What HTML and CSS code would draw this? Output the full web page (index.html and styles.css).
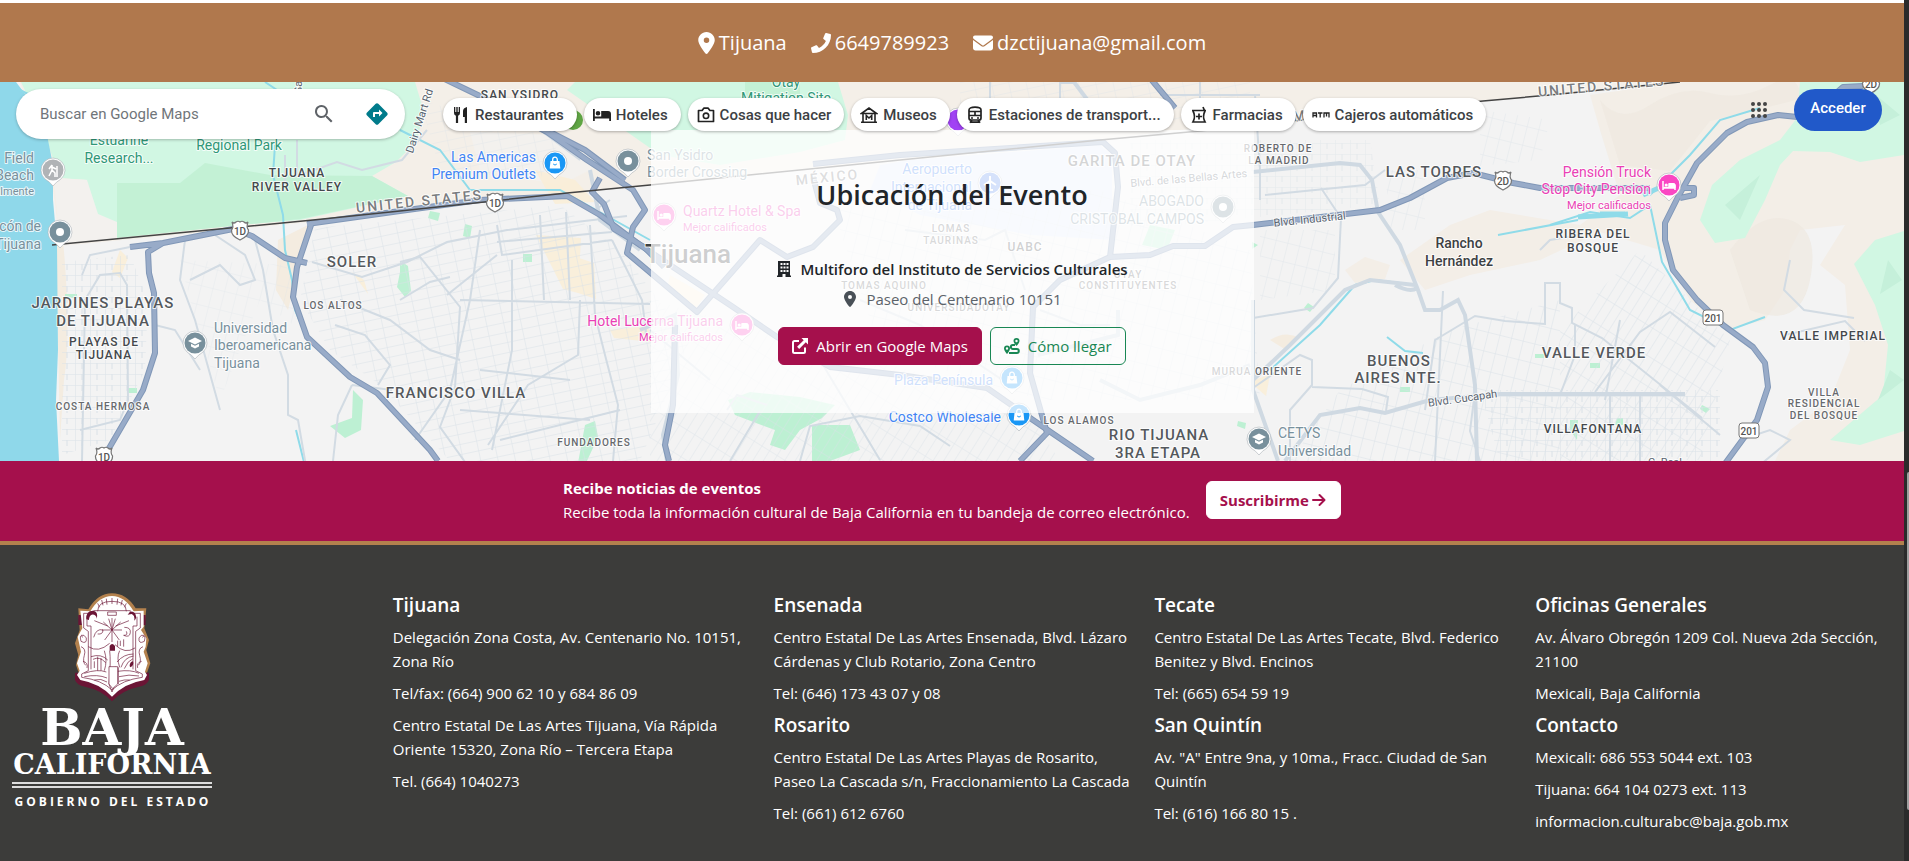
FILE: index.html
```html
<!DOCTYPE html>
<html lang="es">
<head>
<meta charset="utf-8">
<title>Ubicación del Evento</title>
<link rel="stylesheet" href="styles.css">
</head>
<body>
<svg class="defs" width="0" height="0" aria-hidden="true">
  <symbol id="i-pin" viewBox="0 0 384 512"><path d="M215.700 499.200C267 435 384 279.400 384 192C384 86 298 0 192 0S0 86 0 192c0 87.400 117 243 168.300 307.200c12.300 15.300 35.100 15.300 47.400 0zM192 128a64 64 0 1 1 0 128 64 64 0 1 1 0-128z"/></symbol>
  <symbol id="i-phone" viewBox="0 0 512 512"><path d="M493.400 24.600l-104-24c-11.300-2.600-22.900 3.300-27.500 13.900l-48 112c-4.200 9.800-1.400 21.300 6.900 28l60.600 49.600c-36 76.700-98.900 140.500-177.200 177.200l-49.600-60.600c-6.800-8.300-18.200-11.100-28-6.900l-112 48C3.900 366.500-2 378.100.6 389.400l24 104C27.100 504.200 36.700 512 48 512c256.100 0 464-207.500 464-464 0-11.200-7.700-20.900-18.600-23.400z"/></symbol>
  <symbol id="i-mail" viewBox="0 0 512 512"><path d="M48 64C21.500 64 0 85.500 0 112c0 15.100 7.100 29.300 19.200 38.400L236.800 313.600c11.400 8.500 27 8.500 38.400 0L492.800 150.400c12.100-9.100 19.200-23.300 19.200-38.400c0-26.500-21.500-48-48-48L48 64zM0 176L0 384c0 35.300 28.700 64 64 64l384 0c35.300 0 64-28.700 64-64l0-208L294.400 339.200c-22.800 17.100-54 17.100-76.800 0L0 176z"/></symbol>
  <symbol id="i-building" viewBox="0 0 14 16"><path fill-rule="evenodd" d="M1 0h12v14.500h1V16H8.500v-3h-3v3H0v-1.500h1zM3.500 2v2h2V2zM6.500 2v2h2V2zM9.500 2v2h2V2zM3.500 5.500v2h2v-2zM6.500 5.500v2h2v-2zM9.500 5.500v2h2v-2zM3.500 9v2h2V9zM6.500 9v2h2V9zM9.500 9v2h2V9z"/></symbol>
  <symbol id="i-open" viewBox="0 0 16 16"><path d="M7 3H2.500Q1 3 1 4.500v9Q1 15 2.500 15h9q1.500 0 1.500-1.500V9.500" fill="none" stroke="currentColor" stroke-width="2"/><path d="M9.500 0H16v6.500l-2.200-2.200-6.600 6.600-2.100-2.100 6.600-6.600z"/></symbol>
  <symbol id="i-route" viewBox="0 0 16 16"><path fill-rule="evenodd" d="M12.500 0a3 3 0 0 1 3 3c0 1.700-2 4-3 5-1-1-3-3.300-3-5a3 3 0 0 1 3-3zm0 1.800a1.200 1.200 0 1 0 0 2.400 1.200 1.200 0 0 0 0-2.400zM3 7.500a3 3 0 0 1 3 3c0 1.700-2 4.500-3 5.500-1-1-3-3.800-3-5.500a3 3 0 0 1 3-3zm0 1.800a1.200 1.200 0 1 0 0 2.400 1.200 1.200 0 0 0 0-2.400z"/><path d="M11 7H8.800a1.900 1.900 0 0 0 0 3.900h4a2 2 0 0 1 0 4H5" fill="none" stroke="currentColor" stroke-width="2"/></symbol>
  <symbol id="i-arrow" viewBox="0 0 16 16"><path d="M2 8h11M8.500 3l5 5-5 5" fill="none" stroke="currentColor" stroke-width="2" stroke-linecap="round" stroke-linejoin="round"/></symbol>
  <symbol id="i-search" viewBox="0 0 24 24"><path d="M15.500 14h-.8l-.3-.3A6.500 6.500 0 1 0 13.700 14.400l.3.300v.8l5 5 1.500-1.500zm-6 0a4.500 4.500 0 1 1 0-9 4.500 4.500 0 0 1 0 9z"/></symbol>
  <symbol id="i-dir" viewBox="0 0 24 24"><path fill-rule="evenodd" d="M12 1.200q.7 0 1.300.6l8.900 8.900q1.100 1.300 0 2.600l-8.900 8.900q-1.300 1.100-2.600 0l-8.900-8.900q-1.100-1.300 0-2.600l8.900-8.900q.6-.6 1.300-.6zM14 7.500V10H9q-1 0-1 1v4h2v-3h4v2.500l3.500-3.500z"/></symbol>
  <symbol id="i-food" viewBox="0 0 16 18"><path d="M1 1h1.300v5h1V1h1.400v5h1V1H7v6q0 2-1.900 2.700V17H2.900V9.700Q1 9 1 7zM14 1v16h-2.200v-6H10V5q0-3 4-4z"/></symbol>
  <symbol id="i-bed" viewBox="0 0 18 14"><path d="M0 1h1.800v7.500h6.400V3H15q3 0 3 3v7h-1.800v-2.500H1.800V13H0zM5 3a2.300 2.300 0 1 1 0 4.600A2.300 2.300 0 0 1 5 3z"/></symbol>
  <symbol id="i-camera" viewBox="0 0 18 16"><path d="M1.500 3.500h3.600L6.800 1.200h4.400l1.700 2.300h3.600v11h-15z" fill="none" stroke="currentColor" stroke-width="1.700" stroke-linejoin="round"/><circle cx="9" cy="8.800" r="2.700" fill="none" stroke="currentColor" stroke-width="1.600"/></symbol>
  <symbol id="i-museum" viewBox="0 0 18 18"><path d="M1.500 7.500L9 2l7.500 5.500zM3 8v8M15 8v8M1 16.200h16M6.300 14V9.500L9 12l2.700-2.500V14" fill="none" stroke="currentColor" stroke-width="1.600"/></symbol>
  <symbol id="i-train" viewBox="0 0 16 18"><path d="M2 4q0-2.800 6-2.800T14 4v8q0 2-2 2H4q-2 0-2-2zM2 5.500h12M2 9.500h12M8 5v5M5 14l-2 2.800M11 14l2 2.800M4 16.200h8" fill="none" stroke="currentColor" stroke-width="1.700"/><circle cx="5" cy="12" r="1"/><circle cx="11" cy="12" r="1"/></symbol>
  <symbol id="i-pharm" viewBox="0 0 16 18"><path d="M1 4.500h14M2 5q3 5.500 0 11h12q-3-5.500 0-11M13.500 4.500L12 1M8 7.500v6M5 10.500h6" fill="none" stroke="currentColor" stroke-width="1.700"/></symbol>
  <symbol id="i-atm" viewBox="0 0 18 8"><path d="M1 6.500V2h3.500v4.500M1 4.500h3.500M6 2h4.500M8.200 2v4.500M12 6.500V2h5v4.500M14.500 2v3.500" fill="none" stroke="currentColor" stroke-width="1.300"/></symbol>
  <symbol id="i-apps" viewBox="0 0 18 18"><g><circle cx="3" cy="3" r="2"/><circle cx="9" cy="3" r="2"/><circle cx="15" cy="3" r="2"/><circle cx="3" cy="9" r="2"/><circle cx="9" cy="9" r="2"/><circle cx="15" cy="9" r="2"/><circle cx="3" cy="15" r="2"/><circle cx="9" cy="15" r="2"/><circle cx="15" cy="15" r="2"/></g></symbol>
</svg>

<div class="page">
  <header class="contact">
    <a class="contact-item" href="#mapa"><svg class="ico-pin"><use href="#i-pin"/></svg>Tijuana</a>
    <a class="contact-item" href="tel:6649789923"><svg class="ico"><use href="#i-phone"/></svg>6649789923</a>
    <a class="contact-item" href="mailto:dzctijuana@gmail.com"><svg class="ico"><use href="#i-mail"/></svg>dzctijuana@gmail.com</a>
  </header>

  <section class="map" id="mapa">
    <svg class="map-art" viewBox="0 82 1904 379" preserveAspectRatio="xMidYMid slice">
      <defs>
        <pattern id="g1" width="15" height="11" patternUnits="userSpaceOnUse"><path d="M0 0H15M0 0V11M7 0V6" class="grid"/></pattern>
        <pattern id="g2" width="17" height="10" patternUnits="userSpaceOnUse" patternTransform="rotate(-12)"><path d="M0 0H17M0 0V10" class="grid"/></pattern>
        <pattern id="g3" width="9" height="26" patternUnits="userSpaceOnUse" patternTransform="rotate(32)"><path d="M0 0H9M0 0V26" class="grid"/></pattern>
        <pattern id="g4" width="12" height="19" patternUnits="userSpaceOnUse" patternTransform="rotate(14)"><path d="M0 0H12M0 0V19" class="grid"/></pattern>
        <g id="pinshape"><path d="M0 16Q-3 12-8 9A12 12 0 1 1 8 9Q3 12 0 16z" fill="#fff" stroke="#a9b0b5" stroke-width=".6"/></g>
        <g id="pdot"><use href="#pinshape"/><circle r="10.500" fill="#78909c"/><circle r="4" fill="#fff"/></g>
        <g id="pbed"><use href="#pinshape"/><circle r="10.500" fill="#fa47c3"/><path d="M-6-4v9M-6 3H6.500M6 5V1q0-2-2-2H0v3.500h-5" fill="none" stroke="#fff" stroke-width="1.500"/><path d="M0-2h4q2.500 0 2.500 2v3H0z" fill="#fff"/><circle cx="-2.800" cy="0" r="1.600" fill="#fff"/></g>
        <g id="pshop"><use href="#pinshape"/><circle r="10.500" fill="#1a97f5"/><path d="M-4.500-2h9l.8 7.500H-5.300z" fill="#fff"/><path d="M-2.300-2v-1.500a2.300 2.300 0 0 1 4.600 0V-2" fill="none" stroke="#fff" stroke-width="1.300"/><path d="M-1.800 1q1.800 2.200 3.600 0" fill="none" stroke="#1a97f5"/></g>
        <g id="pedu"><use href="#pinshape"/><circle r="10.500" fill="#78909c"/><path d="M0-5.500L7-2 0 1.500-7-2z" fill="#fff"/><path d="M-4 .8v2.700L0 5.500l4-2V.8L0 2.800z" fill="#fff"/></g>
        <g id="shield"><path d="M-8-8q2 2 4 0 2-1.500 4 0 2-1.500 4 0 2 2 4 0 -2 5 .5 8Q9 6 0 10-9 6-8.500 0-6-3-8-8z" fill="#fff" stroke="#777" stroke-width="1.200"/></g>
      </defs>

      <!-- Land, hills and parks -->
      <rect y="82" width="1904" height="379" fill="#f3f3f3"/>
      <path d="M20 82H1700L1491 101 1180 130 1100 140 900 159 650 185 480 203 300 223 60 246 52 180z" fill="#f4efe8"/>
      <path d="M1680 82H1904V461H1775L1790 430 1830 400 1850 350 1845 285 1820 265 1845 225 1800 230 1790 250 1785 290 1765 320 1725 330 1690 300 1660 250 1600 232 1540 260 1470 275 1440 285 1425 290 1400 260 1450 225 1490 210 1580 225 1620 195 1600 130 1590 95z" fill="#f3eee7"/>
      <path d="M1345 270l20-13 25 8-5 14-30 4z" fill="#f3eee7"/>
      <path d="M1600 100q20 25 50 5t60-12 60-8 30 14l-90 22-40 50-50-6zM1730 250q30-40 60-30t20 60-60 30z" fill="#eee8e0" opacity=".7"/>
      <path d="M1270 340q15-10 30-2l-14 12zM62 230q10 100 2 150l-4 60-4-200z" fill="#f4ece0"/>
      <path d="M278 240l30-15-10 45-10 40-12-20z" fill="#f4ece0"/>
      <path d="M21 82H415L424 112 416 142 396 162 372 176 408 196 300 220 110 235 95 215 88 180 60 178 50 150 44 130z" fill="#d1f7e3"/>
      <path d="M117 183L180 183 205 163 270 175 372 176 408 196 300 219 117 238z" fill="#c3f1d5"/>
      <path d="M88 180L117 183 117 238 60 246 54 178z" fill="#f3f1ee"/>
      <path d="M87 180L117 180V222L98 214z" fill="#d1f7e3"/>
      <path d="M567 90L575 82H838L848 115 845 140 800 152 720 165 660 155 610 120z" fill="#d1f7e3"/>
      <path d="M745 82h55v35h-55z" fill="#c3f1d5"/>
      <path d="M1800 82H1904V155L1860 162 1830 152 1793 151 1780 165 1765 200 1745 238 1715 243 1700 220 1712 185 1740 160 1780 140 1797 118z" fill="#d1f7e3"/>
      <path d="M1904 231L1875 240 1854 264 1875 305 1888 345 1883 395 1830 440 1860 445 1904 431z" fill="#d1f7e3"/>
      <path d="M1870 90l30 25-20 10zM1725 205l35-30-20 45zM1888 260l14 20-22 14zM1890 370l14 10-26 20z" fill="#c5f0da"/>
      <path d="M470 132L560 135 600 165 560 185 480 170z" fill="#f3f1ee"/>
      <path d="M880 165L910 160 1100 145 1112 155 1112 240 1030 235 920 215 870 190z" fill="#e4ecfa"/>
      <path d="M536 235l45 3-3 55-15-4zM570 255l24 8 2 36-24-8zM535 170l40 10 20 22-40 2zM120 250l8 8-8 20-8-6zM610 330l38-4 4 16-38-4zM1250 382l20-8-4 22zM670 275l35 20-10 15-28-20zM352 272l12 8 4 14z" fill="#faeed4" opacity=".8"/>
      <path d="M0 82H16L28 98 42 115 47 135 53 165 53 200 57 245 58 350 56 400 59 461H0z" fill="#8fd8ea"/>
      <path d="M728 400L750 392 800 397 835 405 822 418 800 430 785 450 770 445 775 430 735 415zM812 425L850 425 860 450 830 461 812 461zM402 262l6 4 3 25-6 6-8-10zM353 390l10 10-2 30-16 8-15-12 22-8zM430 211l10 2-2 8-10-3zM465 224l7 2-2 12-7-2zM523 254h9v8h-9zM400 262l8 30-8-5zM585 425l10-4 3 16-12 26h-8zM1308 303l6 4-4 5-6-4zM1252 242l6 3-6 4zM1400 387h10v5h-10zM1535 354h9v4h-9zM1590 363h10v5h-10zM1570 420h8l-1 20-7-10zM1617 418h6v7h-8zM1702 405l8 4-4 4-6-4zM1238 421l8 2-1 6-8-3zM128 388h9v5h-9zM65 294h12v4H65zM1150 225l25 5-8 20-25-5z" fill="#bdf0d3"/>

      <!-- Street grids -->
      <path d="M62 262L130 255 148 300 145 370 110 440 62 455z" fill="url(#g1)"/>
      <path d="M315 228L560 205 620 250 690 340 640 461 450 461 380 385 330 350 300 300z" fill="url(#g2)"/>
      <path d="M180 260L290 265 300 330 260 300 220 400 190 300z" fill="url(#g4)" opacity=".5"/>
      <path d="M650 300L1020 400 1060 461 650 461z" fill="url(#g3)" opacity=".8"/>
      <path d="M830 200L1100 190 1250 250 1260 400 1040 400 880 350z" fill="url(#g4)"/>
      <path d="M1130 140L1370 140 1380 205 1130 230z" fill="url(#g1)" opacity=".6"/>
      <path d="M1260 230h75v60l-75 10zM1385 170h40v60h-35zM1480 110l70 10-10 40-60 6z" fill="url(#g4)" opacity=".7"/>
      <path d="M1340 390L1450 330 1560 300 1560 461 1290 461z" fill="url(#g4)"/>
      <path d="M1560 330L1640 250 1730 340 1700 460 1560 461z" fill="url(#g3)"/>
      <path d="M1480 390h240v71h-220z" fill="url(#g1)"/>
      <path d="M420 100L560 140 540 180 440 170zM960 82h290v38H960z" fill="url(#g2)" opacity=".6"/>

      <!-- Streams -->
      <g fill="none" stroke="#8fdbe9" stroke-width="2">
        <path d="M275 145L273 175 283 215 285 250 292 280 295 310 310 345M400 130L440 150 470 190 560 190 650 240M296 430l8 32M1387 337l18 14 18 2M1498 235l80-15"/>
        <path d="M1550 225L1590 212 1630 218 1650 205 1662 262 1690 310 1730 330 1765 317M1650 195L1690 155 1720 120 1760 108"/>
        <path d="M1578 217l50-3M1600 214h25M1643 195l18-8" stroke-width="5"/>
        <path d="M1270 370L1320 325 1355 285 1375 280 1400 283M20 90l40 20 20-15M265 82l15 10"/>
      </g>

      <!-- Secondary roads -->
      <g class="minor">
        <path d="M82 461L85 300 100 275 120 273 127 285 128 400 120 420 80 430M130 247L90 255 82 275"/>
        <path d="M155 325l20 5 25 40M185 240l-5 40 15 40 25 90M190 280l30-15 20 20 15-5-10-25-30-20M255 240l8 30 10 60 15 45v40l10 5 8 46M312 262l50 15 45-15 40-20 60-12 120-14"/>
        <path d="M352 385l-14 30-5 46M352 385l40 5M400 262l20-5 40 50-5 80-15 40 25 35M480 230l-10 70-20 90-35 50M497 225l5 30 110-15M497 255l-50 40M512 260v90l-20 100M590 225l5 90 10 40 13 50-5 56M612 240l30 60 5 40M460 300l190 4M580 300l-2 55-50 30-40 60M400 300l30-18 20-5"/>
        <path d="M335 325l30 10 25 30-12 20M340 300l50 20 40 30 30 10M497 242l115-10M540 215l4 85M566 212l4 88M480 370l90 10M460 410l130 10M500 440l120-30"/>
        <path d="M800 461l10-35 50-10 60 10 30 20M727 410l10-15 30 10M650 330l60 50M860 300l60 25 90 60M905 230l80 10 20-10 20 60M1040 310l40 15 30 0"/>
        <path d="M1253 318l60-10 25-30 3-60-20-30M1260 200v-30l-5-75M1265 195l100-10 20-15M1253 388L1300 355 1312 360V385L1290 410 1290 461M1312 387l50 2 26 8-2 14"/>
        <path d="M1435 461l8-170M1425 410l10-70 40-24 30 5 40 3V283h15v20l12 5v15l30 15 100 80M1575 325v30l-15 40M1595 392l45-60 30-20 45 35M1540 250l10-10 30-5M1620 320l-15 80M1480 461l-10-30 5-40M1610 395v66M1640 395v66M1660 385l60 50"/>
        <path d="M990 82v35l20-10 30 5M1060 82v40M1160 95h100M1200 82v40M820 360l60 100M730 461l30-50M540 130l40 30M610 200l-15 10 10 15"/>
        <path d="M285 155v30M297 140v36l40-14 25 8 40-10 25-30M1790 260l-6 30 20 20 50 8M1785 335l60-14 20 20M1740 440l30-10 20 10-30 25"/>
      </g>
      <g class="mid">
        <path d="M1253 172L1340 163 1360 165 1372 180 1378 212 1400 245 1418 290 1425 310 1440 310 1458 300 1465 315 1475 385 1477 461"/>
        <path d="M1285 461L1320 415 1360 408 1385 413 1430 400 1500 394 1685 394M1253 300v90l25 71"/>
        <path d="M1253 380L1290 345 1345 290 1370 280 1415 285M1395 285q15 8 22 3M1100 380l40 20 60-15 50-20M590 170l10 50 40 30"/>
        <path d="M640 330l35-15 3 60-15 60 4 26M1060 82h14l15 20h60M1118 310v25l-80 20"/>
      </g>

      <!-- Highways -->
      <g class="hw-edge">
        <path id="h1" d="M130 247L163 243 233 229 252 236 285 258 307 263M163 243L148 252 149 273 154 293 155 353 143 390 108 450M312 222L297 267 293 297 307 337 350 377 377 393 430 450 438 461"/>
        <path id="h2" d="M307 224L400 211 480 200 567 196 600 215 640 245 673 267 733 307 777 337 830 367 900 375 987 388 1033 420 1093 461"/>
        <path id="h3" d="M430 72L482 97 547 132 587 160 633 190 645 210 633 227 627 253 697 312 760 240 787 257 813 247 840 220 837 210 820 203 813 177M600 178l-8 14 12 12 10 25 30 18 20 20M550 132l35 18 40 30"/>
        <path id="h4" d="M813 164L900 155 1103 142 1115 153 1118 187 1110 257 1060 280 1033 307 1030 373 1047 433 1020 461M1110 257L1150 255 1173 246 1205 246 1233 227 1253 225 1380 210 1410 198 1447 178 1473 173 1513 183 1540 188H1650M1150 78l25 30M675 325l-2 80-8 40 4 16"/>
        <path id="h5" d="M1863 86L1843 87 1807 118 1778 115 1747 122 1727 133 1697 163 1678 197 1665 223 1665 240 1673 270 1697 300 1723 325 1753 347 1765 363 1768 387 1757 420 1724 465M1680 198l14-3V188h-10"/>
      </g>
      <g class="hw"><use href="#h1"/><use href="#h2"/><use href="#h3"/><use href="#h4"/><use href="#h5"/></g>

      <!-- Border -->
      <path d="M52 245L313 220 400 211 567 193 650 185 880 162 1100 140 1200 131 1483 101 1550 95 1680 82" fill="none" stroke="#444" stroke-width="1.500"/>

      <!-- District names -->
      <g class="lbl district">
        <text x="103" y="308">JARDINES PLAYAS</text><text x="103" y="326">DE TIJUANA</text>
        <text x="352" y="267">SOLER</text><text x="456" y="398">FRANCISCO VILLA</text>
        <text x="1132" y="166">GARITA DE OTAY</text><text x="1434" y="177">LAS TORRES</text>
        <text x="1399" y="366">BUENOS</text><text x="1398" y="383">AIRES NTE.</text>
        <text x="1594" y="358">VALLE VERDE</text><text x="1159" y="440">RIO TIJUANA</text><text x="1158" y="458">3RA ETAPA</text>
      </g>
      <g class="lbl hood">
        <text x="297" y="177">TIJUANA</text><text x="297" y="191">RIVER VALLEY</text>
        <text x="104" y="346">PLAYAS DE</text><text x="104" y="359">TIJUANA</text><text x="520" y="99">SAN YSIDRO</text>
        <text x="1593" y="238">RIBERA DEL</text><text x="1593" y="252">BOSQUE</text><text x="1833" y="340">VALLE IMPERIAL</text>
        <text x="1593" y="433">VILLAFONTANA</text><text x="1025" y="251">UABC</text>
      </g>
      <g class="lbl small">
        <text x="333" y="309">LOS ALTOS</text><text x="103" y="410">COSTA HERMOSA</text><text x="594" y="446">FUNDADORES</text>
        <text x="951" y="232">LOMAS</text><text x="951" y="244">TAURINAS</text><text x="884" y="289">TOMAS AQUINO</text>
        <text x="959" y="311">UNIVERSIDADOTAY</text><text x="1128" y="278">OTAY</text><text x="1128" y="289">CONSTITUYENTES</text>
        <text x="1278" y="152">ROBERTO DE</text><text x="1279" y="164">LA MADRID</text><text x="1257" y="375">MURUA ORIENTE</text>
        <text x="1079" y="424">LOS ALAMOS</text><text x="1824" y="396">VILLA</text><text x="1824" y="407">RESIDENCIAL</text><text x="1824" y="419">DEL BOSQUE</text>
      </g>
      <g class="lbl country">
        <text x="420" y="206" transform="rotate(-6 420 206)">UNITED STATES</text>
        <text x="828" y="182" transform="rotate(-6 828 182)">MÉXICO</text>
        <text x="1325" y="118" transform="rotate(-6 1325 118)">MÉXICO</text>
        <text x="1602" y="91" transform="rotate(-5 1602 91)">UNITED STATES</text>
      </g>
      <g class="lbl road">
        <text x="1310" y="223" transform="rotate(-6 1310 223)">Blvd. Industrial</text>
        <text x="1189" y="182" transform="rotate(-5 1189 182)">Blvd. de las Bellas Artes</text>
        <text x="1463" y="402" transform="rotate(-8 1463 402)">Blvd. Cucapah</text>
        <text x="423" y="122" transform="rotate(-72 423 122)">Dairy Mart Rd</text>
        <text x="1665" y="466">C. Real</text><text x="302" y="60" transform="rotate(-90 302 60)">Saturn Blvd is</text>
      </g>
      <text class="lbl city" x="688" y="263">Tijuana</text>
      <g class="lbl town"><text x="1459" y="248">Rancho</text><text x="1459" y="266">Hernández</text></g>
      <g class="lbl poi grey" text-anchor="end">
        <text x="34" y="163">Field</text><text x="34" y="180">Beach</text><text x="34" y="195" class="sub">Actualmente</text>
        <text x="41" y="231">Malecón de</text><text x="41" y="249">Tijuana</text>
        <text x="1204" y="206">ABOGADO</text><text x="1204" y="224">CRISTOBAL CAMPOS</text>
      </g>
      <g class="lbl poi grey">
        <text x="214" y="333">Universidad</text><text x="214" y="350">Iberoamericana</text><text x="214" y="368">Tijuana</text>
        <text x="647" y="160">San Ysidro</text><text x="647" y="177">Border Crossing</text>
        <text x="1278" y="438">CETYS</text><text x="1278" y="456">Universidad</text>
      </g>
      <g class="lbl poi green" text-anchor="middle">
        <text x="119" y="145">Estuarine</text><text x="119" y="163">Research...</text><text x="239" y="150">Regional Park</text>
        <text x="786" y="87">Otay</text><text x="786" y="103">Mitigation Site</text>
      </g>
      <g class="lbl poi blue" text-anchor="end">
        <text x="536" y="162">Las Americas</text><text x="536" y="179">Premium Outlets</text>
        <text x="972" y="174">Aeropuerto</text><text x="972" y="192">Internacional</text><text x="972" y="210">de Tijuana</text>
        <text x="993" y="385">Plaza Península</text><text x="1001" y="422">Costco Wholesale</text>
      </g>
      <g class="lbl poi pink">
        <text x="683" y="216">Quartz Hotel &amp; Spa</text><text x="683" y="231" class="sub">Mejor calificados</text>
      </g>
      <g class="lbl poi pink" text-anchor="end">
        <text x="723" y="326">Hotel Lucerna Tijuana</text><text x="723" y="341" class="sub">Mejor calificados</text>
        <text x="1651" y="177">Pensión Truck</text><text x="1651" y="194">Stop City Pension</text><text x="1651" y="209" class="sub">Mejor calificados</text>
      </g>

      <!-- Pins -->
      <g><use href="#pinshape" x="53" y="170"/><circle cx="53" cy="170" r="10.500" fill="#b0b3b6"/><path d="M52 165l-3 4M52 165v5l-3 6M52 170l3 3v4M52 167l4 2M57 166v11" fill="none" stroke="#fff" stroke-width="1.500"/></g>
      <use href="#pdot" x="60" y="232"/><use href="#pdot" x="628" y="161"/><use href="#pdot" x="1223" y="207"/>
      <use href="#pedu" x="195" y="343"/><use href="#pedu" x="1259" y="439"/>
      <use href="#pshop" x="555" y="163"/><use href="#pshop" x="1012" y="378"/><use href="#pshop" x="1019" y="415"/>
      <use href="#pbed" x="664" y="215"/><use href="#pbed" x="742" y="325"/><use href="#pbed" x="1669" y="185"/>
      <g><use href="#pinshape" x="990" y="183"/><circle cx="990" cy="183" r="10.500" fill="#5b8def"/><path d="M990 176v13M984 185l6-4 6 4M987 190h6" fill="none" stroke="#fff" stroke-width="2"/></g>
      <use href="#pinshape" x="958" y="120"/><circle cx="958" cy="120" r="10.500" fill="#a142f4"/>
      <circle cx="573" cy="120" r="10" fill="#5fa544"/>
      <g class="route"><use href="#shield" x="240" y="230"/><text x="240" y="235">1D</text><use href="#shield" x="495" y="202"/><text x="495" y="207">1D</text><use href="#shield" x="104" y="456"/><text x="104" y="461">1D</text><use href="#shield" x="1503" y="180"/><text x="1503" y="185">2D</text><use href="#shield" x="1871" y="83"/><text x="1871" y="88">2D</text>
      <rect x="1703" y="310" width="20" height="15" rx="3" class="plate"/><text x="1713" y="322">201</text><rect x="1739" y="423" width="20" height="15" rx="3" class="plate"/><text x="1749" y="435">201</text></g>
    </svg>

    <div class="map-bar">
      <form class="search">
        <input type="text" placeholder="Buscar en Google Maps" aria-label="Buscar en Google Maps">
        <button type="button" class="plain" aria-label="Buscar"><svg class="s24"><use href="#i-search"/></svg></button>
        <button type="button" class="plain dir" aria-label="Indicaciones"><svg class="s24"><use href="#i-dir"/></svg></button>
      </form>
      <nav class="chips">
        <button type="button" class="chip"><svg><use href="#i-food"/></svg>Restaurantes</button>
        <button type="button" class="chip"><svg><use href="#i-bed"/></svg>Hoteles</button>
        <button type="button" class="chip"><svg><use href="#i-camera"/></svg>Cosas que hacer</button>
        <button type="button" class="chip"><svg><use href="#i-museum"/></svg>Museos</button>
        <button type="button" class="chip"><svg><use href="#i-train"/></svg>Estaciones de transport...</button>
        <button type="button" class="chip"><svg><use href="#i-pharm"/></svg>Farmacias</button>
        <button type="button" class="chip"><svg><use href="#i-atm"/></svg>Cajeros automáticos</button>
      </nav>
      <div class="account">
        <button type="button" class="plain" aria-label="Aplicaciones"><svg class="s18"><use href="#i-apps"/></svg></button>
        <button type="button" class="login">Acceder</button>
      </div>
    </div>

    <div class="card">
      <h2>Ubicación del Evento</h2>
      <p class="venue"><svg><use href="#i-building"/></svg>Multiforo del Instituto de Servicios Culturales</p>
      <p class="address"><svg><use href="#i-pin"/></svg>Paseo del Centenario 10151</p>
      <div class="actions">
        <a class="btn solid" href="#maps"><svg><use href="#i-open"/></svg>Abrir en Google Maps</a>
        <a class="btn outline" href="#llegar"><svg><use href="#i-route"/></svg>Cómo llegar</a>
      </div>
    </div>
  </section>

  <section class="news">
    <p><strong>Recibe noticias de eventos</strong><br>Recibe toda la información cultural de Baja California en tu bandeja de correo electrónico.</p>
    <a class="btn light" href="#suscribirme">Suscribirme<svg><use href="#i-arrow"/></svg></a>
  </section>

  <footer class="footer">
    <div class="col">
      <svg class="logo" viewBox="0 0 200 216" role="img" aria-label="Baja California, Gobierno del Estado">
        <g transform="scale(.3333) translate(-33 -39)">
          <path d="M232 275L225 255 232 225 222 190 236 150 232 85 262 88Q290 40 333 40T404 85L436 85 430 145 444 180 436 210 448 250 438 278z" fill="#b3814d"/>
          <path d="M232 105h202v30H232zM222 278h222v22q-5 15-30 20-50 10-81 44-30-34-81-44-25-5-30-20z" fill="#6b1535"/>
          <path d="M238 92L268 94Q295 48 333 48T398 94L428 92V140L420 150 436 175 434 200 428 215 440 250 432 275 438 285 430 300Q370 310 333 350 296 310 238 300L228 285 236 272 228 250 240 215 230 170 244 145z" fill="#fff"/>
          <g fill="none" stroke="#6b1535" stroke-width="2">
            <path d="M248 100v44l14 10v118l-20 10v10q60 8 91 38 31-30 91-38v-10l-20-10V154l14-10v-44h-30v-8h-110v8zM258 110v28h12v130M408 110v28h-12v130"/>
            <path d="M290 94q0-30 43-30t43 30M296 82l-6-12M306 76l-4-16M318 74l-2-18M333 72V54M348 74l2-18M360 76l4-16M370 82l6-12M320 96h26v10h-26z"/>
            <path d="M333 150v-36M333 150v36M333 150l-26-24M333 150l26-24M333 150h-30M333 150h30M333 150l-22 30M333 150l22 30M323 116l10 34 10-34M280 122l40 16M384 122l-40 16"/>
            <path d="M278 172q8-28 28-22 0 14-16 12M370 142q20 0 18 16t-20 8q14 0 8-12M262 200q30 20 64-10M342 194q30 30 60 10M270 230q30-10 50 10M276 238q20-10 38 10M290 230v42M300 234v38M280 244v20"/>
            <path d="M246 172q-12-12-6 12 18 10 16-10-6-12-16-8M424 172q12-12 6 12-18 10-16-10 6-12 16-8M240 200q16 6 10 26t4 30M426 200q-16 6-10 26t-4 30M246 244q16 4 12 20M422 244q-16 4-12 20"/>
            <path d="M326 212q4 30-2 100l9 24 10-24V260M352 262v50M310 212q10 30 0 60M356 212q-10 20 0 50M350 200v-18M358 198v-16M368 200v-22M348 246q20-24 50-24M360 262q10-30 38-34M370 266q10-24 26-30M250 280q40-14 66-4M250 290q40-8 68 4M350 274q40-6 64 6M354 290q30-8 60-2M280 300q20-6 38 6M354 304q16-6 32-4"/>
          </g>
          <path d="M326 212v-14q7-12 16 0v14zM256 118q-2-26 20-26 16 2 12 24-4-14-16-12-8 4-8 16zM380 104q10-16 22-4 8 14-2 22 2-16-8-20zM386 258q0-12 10-14 4 12-8 18z" fill="#6b1535"/>
          <path d="M324 260h26v52l-15 14-11-14z" fill="#fff" stroke="#6b1535" stroke-width="2"/>
        </g>
        <g fill="#fff" text-anchor="middle">
          <text class="logo-baja" x="100" y="152">BAJA</text>
          <text class="logo-cal" x="100" y="181">CALIFORNIA</text>
          <path d="M0 190h200M0 194h200" stroke="#ddd" stroke-width="2"/>
          <text class="logo-gob" x="101" y="213">GOBIERNO DEL ESTADO</text>
        </g>
      </svg>
    </div>
    <div class="col">
      <h3>Tijuana</h3>
      <p>Delegación Zona Costa, Av. Centenario No. 10151, Zona Río</p>
      <p>Tel/fax: (664) 900 62 10 y 684 86 09</p>
      <p>Centro Estatal De Las Artes Tijuana, Vía Rápida Oriente 15320, Zona Río – Tercera Etapa</p>
      <p>Tel. (664) 1040273</p>
    </div>
    <div class="col">
      <h3>Ensenada</h3>
      <p>Centro Estatal De Las Artes Ensenada, Blvd. Lázaro Cárdenas y Club Rotario, Zona Centro</p>
      <p>Tel: (646) 173 43 07 y 08</p>
      <h3>Rosarito</h3>
      <p>Centro Estatal De Las Artes Playas de Rosarito, Paseo La Cascada s/n, Fraccionamiento La Cascada</p>
      <p>Tel: (661) 612 6760</p>
    </div>
    <div class="col">
      <h3>Tecate</h3>
      <p>Centro Estatal De Las Artes Tecate, Blvd. Federico Benitez y Blvd. Encinos</p>
      <p>Tel: (665) 654 59 19</p>
      <h3>San Quintín</h3>
      <p>Av. "A" Entre 9na, y 10ma., Fracc. Ciudad de San Quintín</p>
      <p>Tel: (616) 166 80 15 .</p>
    </div>
    <div class="col">
      <h3>Oficinas Generales</h3>
      <p>Av. Álvaro Obregón 1209 Col. Nueva 2da Sección, 21100</p>
      <p>Mexicali, Baja California</p>
      <h3>Contacto</h3>
      <p>Mexicali: 686 553 5044 ext. 103</p>
      <p>Tijuana: 664 104 0273 ext. 113</p>
      <p><a href="mailto:informacion.culturabc@baja.gob.mx">informacion.culturabc@baja.gob.mx</a></p>
    </div>
  </footer>
</div>
<div class="rail"><div class="thumb"></div></div>
</body>
</html>
```
FILE: styles.css
```css
* { box-sizing: border-box; }
body {
  margin: 0;
  min-height: 100vh;
  display: flex;
  background: #2b2b2b;
  font-family: "Segoe UI", "Open Sans", "Noto Sans", sans-serif;
  font-size: 15px;
  line-height: 24px;
  color: #212529;
}
a { color: inherit; text-decoration: none; }
h2, h3, p { margin: 0; }
svg { fill: currentColor; flex: none; }
.defs { position: absolute; }
.page {
  flex: 1;
  min-width: 0;
  display: flex;
  flex-direction: column;
  border-top: 3px solid #fff;
}
.rail { width: 5px; padding-left: 3px; background: #2b2b2b; }
.thumb { height: 338px; margin-top: 472px; border-radius: 3px 0 0 3px; background: #9f9f9f; }

/* Contact bar */
.contact {
  display: flex;
  justify-content: center;
  align-items: center;
  gap: 24px;
  padding: 25px 0 24px;
  background: #b0784d;
  color: #fff;
  font-size: 20px;
  line-height: 30px;
}
.contact-item { display: flex; align-items: center; gap: 4px; }
.ico { width: 20px; height: 20px; }
.ico-pin { width: 17px; height: 22px; }

/* Map */
.map {
  position: relative;
  display: flex;
  justify-content: center;
  padding: 48px 0;
  overflow: hidden;
}
.map-art { position: absolute; inset: 0; width: 100%; height: 100%; }
.grid { fill: none; stroke: #dae1e7; stroke-width: 1; }
.minor { fill: none; stroke: #d2dbe3; stroke-width: 2; }
.mid { fill: none; stroke: #cfd9e2; stroke-width: 4; }
.hw-edge { fill: none; stroke: #8097b7; stroke-width: 6; stroke-linejoin: round; }
.hw { fill: none; stroke: #98abc8; stroke-width: 4; stroke-linejoin: round; }
.lbl {
  font-family: Roboto, sans-serif;
  paint-order: stroke;
  stroke: #fff;
  stroke-width: 2px;
  stroke-opacity: .8;
  stroke-linejoin: round;
}
.district { font-size: 15px; font-weight: 500; letter-spacing: 1px; fill: #54585c; text-anchor: middle; }
.hood { font-size: 12px; font-weight: 500; letter-spacing: 1px; fill: #44484c; text-anchor: middle; }
.small { font-size: 10px; font-weight: 500; letter-spacing: 1px; fill: #66696d; text-anchor: middle; }
.country { font-size: 14px; font-weight: 500; letter-spacing: 2px; fill: #7a7d80; text-anchor: middle; }
.road { font-size: 11px; fill: #5a6470; text-anchor: middle; }
.city { font-size: 26px; font-weight: 500; fill: #3c4043; text-anchor: middle; }
.town { font-size: 14px; font-weight: 500; fill: #3c4043; text-anchor: middle; }
.poi { font-size: 14px; }
.sub { font-size: 11px; }
.grey { fill: #78909c; }
.green { fill: #2f9777; }
.blue { fill: #4285f4; }
.pink { fill: #ea3fb5; }
.route { font: 500 10px Roboto, sans-serif; fill: #555; text-anchor: middle; }
.plate { fill: #fff; stroke: #777; }

.map-bar {
  position: absolute;
  z-index: 2;
  inset: 7px 22px auto 16px;
  display: flex;
  align-items: flex-start;
  font-family: Roboto, sans-serif;
}
.map-bar button { font: 500 15px Roboto, sans-serif; cursor: pointer; border: 0; }
.plain { display: flex; padding: 0; background: none; color: #5f6368; }
.dir { color: #007b8b; }
.s24 { width: 24px; height: 24px; }
.s18 { width: 18px; height: 18px; color: #444; }
.search {
  display: flex;
  align-items: center;
  width: 389px;
  height: 50px;
  padding: 0 16px 0 24px;
  gap: 29px;
  border-radius: 25px;
  background: #fff;
  box-shadow: 0 1px 3px rgba(0, 0, 0, .25);
}
.search input { flex: 1; min-width: 0; border: 0; padding: 0; font: 15px Roboto, sans-serif; }
.search input::placeholder { color: #70757a; }
.chips { display: flex; gap: 7px; margin: 9px 0 0 38px; }
.chip {
  display: flex;
  align-items: center;
  gap: 5px;
  height: 33px;
  padding: 0 13px 0 9px;
  border-radius: 17px;
  background: #fff;
  color: #3c4043;
  box-shadow: 0 1px 3px rgba(0, 0, 0, .3);
}
.chip svg { width: 18px; height: 18px; color: #222; }
.account { display: flex; align-items: flex-start; gap: 26px; margin-left: auto; }
.account .plain { padding-top: 12px; }
.map-bar .login {
  height: 42px;
  width: 88px;
  padding: 0 0 4px;
  border-radius: 21px;
  background: #2159c9;
  color: #fff;
}

.card {
  position: relative;
  z-index: 1;
  width: 603px;
  padding: 48px;
  background: rgba(255, 255, 255, .75);
  text-align: center;
}
.card h2 { margin-bottom: 45px; font-size: 27px; font-weight: 600; line-height: 34px; }
.card p { display: flex; justify-content: center; align-items: center; gap: 8px; }
.card p svg { width: 16px; height: 16px; }
.venue { margin-bottom: 6px; font-weight: 600; }
.address { color: #5c636a; }
.address svg { color: #495057; }
.actions { display: flex; justify-content: center; gap: 8px; margin-top: 16px; }
.btn {
  display: flex;
  align-items: center;
  gap: 8px;
  padding: 6px 13px;
  border: 1px solid;
  border-radius: 6px;
}
.btn svg { width: 16px; height: 16px; }
.solid { background: #a5104c; border-color: #a5104c; color: #fff; }
.outline { border-color: #198754; color: #198754; }
.light { background: #fff; border-color: #fff; color: #a5104c; font-weight: 700; gap: 2px; }

/* Newsletter */
.news {
  display: flex;
  justify-content: center;
  align-items: center;
  gap: 16px;
  padding: 15px 0 17px;
  background: #a5104c;
  border-bottom: 4px solid #b3814d;
  color: #fff;
}

/* Footer */
.footer {
  flex: 1;
  display: grid;
  grid-template-columns: repeat(5, 1fr);
  padding: 48px 0 24px;
  background: #3c3c3a;
  color: #fff;
}
.col { padding: 0 12px; display: flex; flex-direction: column; gap: 8px; }
.col h3 { font-size: 19px; font-weight: 600; line-height: 24px; }
.logo { width: 200px; height: 216px; }
.logo-baja { font: 700 50px "DejaVu Serif", serif; }
.logo-cal { font: 700 27px "DejaVu Serif", serif; }
.logo-gob { font: 700 12px "Open Sans", sans-serif; letter-spacing: 3px; }
```
